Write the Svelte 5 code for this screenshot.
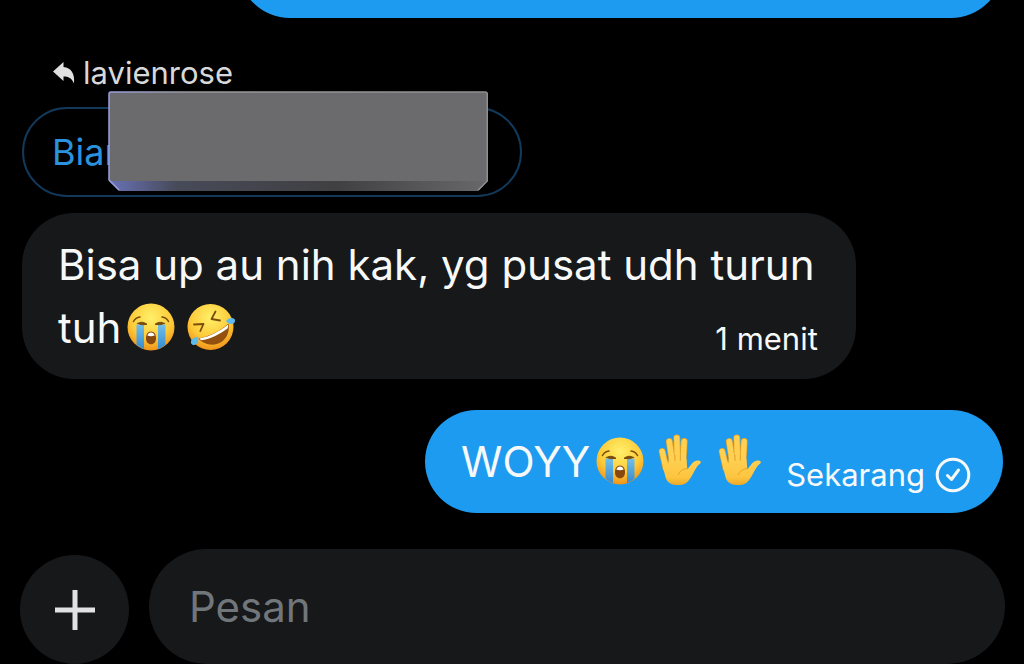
<script>
    let draft = $state("");

    const received = {
        text: "Bisa up au nih kak, yg pusat udh turun tuh",
        emoji: ["sob", "rofl"],
        time: "1 menit",
    };

    const sent = {
        text: "WOYY",
        emoji: ["sob", "hand", "hand"],
        time: "Sekarang",
    };
</script>

{#snippet emojiIcon(name)}
    {#if name === "sob"}
        <svg class="emoji" viewBox="0 0 48 48" role="img" aria-label="😭">
            <circle cx="24" cy="24" r="23.5" fill="url(#face)" />
            <path d="M9.5 21.500h7.500v24.700q-4-1.600-7.500-4.500z" fill="url(#tear)" />
            <path d="M31 21.500h7.500v20.200q-3.500 3-7.500 4.500z" fill="url(#tear)" />
            <g fill="none" stroke="#7a4e0a" stroke-linecap="round">
                <path d="M6.500 18.500q2-4 6.500-4.500M41.500 18.500q-2-4-6.500-4.500" stroke-width="1.500" />
                <path d="M10.500 20.500q4.500-3 9.500.8q-5 1.400-9.500-.8zM37.500 20.500q-4.500-3-9.500.8q5 1.400 9.500-.8z" fill="#7a4e0a" stroke-width="1" />
            </g>
            <path d="M24 28.500c3.500 0 5 3 5 6.800s-2 6-5 6-5-2.200-5-6 1.500-6.800 5-6.800z" fill="#87480f" />
            <path d="M20.300 32.500c.7-2 2-3 3.700-3s3 1 3.700 3q-3.700 1.300-7.400 0z" fill="#fff" />
        </svg>
    {:else if name === "rofl"}
        <svg class="emoji" viewBox="0 0 48 48" role="img" aria-label="🤣">
            <circle cx="23.500" cy="24" r="23" fill="url(#face)" />
            <g fill="none" stroke="#7a4e0a" stroke-width="1.800" stroke-linecap="round" stroke-linejoin="round">
                <path d="M7 21.500l9.500-.5-3.200 7" />
                <path d="M28.500 8.500l-4 7.500 8.500 1.500" />
            </g>
            <path d="M11.500 35.500C23 33.500 33 28 41.500 20.500 43 28 40 35.500 34 39.300 27 43.500 17 42 11.500 35.500z" fill="#94500f" />
            <path d="M12.500 35.500C23 33.500 33 28 41 21.500q.3 2-.5 4C33 31 24 36 14 37.300z" fill="#fff" />
            <path d="M39 18c2-3 6-4 8.500-2 1.500 2.500-.5 5-3.500 5-2 0-3.500-1-5-3z" fill="#5ebbed" />
            <path d="M11 34c1 3.500 0 7-3.500 8C4.500 42.500 3 39.500 4.500 37 6 35 8 34 11 34z" fill="#5ebbed" />
        </svg>
    {:else}
        <svg class="emoji hand" viewBox="0 0 48 52" role="img" aria-label="✋">
            <g fill="none" stroke="#e0a22a" stroke-width="6.800" stroke-linecap="round">
                <path d="M6.200 18.500l3.800 17M13.300 8.500l3.200 22M20.800 5l.7 25M28.200 8.500l-1.200 21" />
            </g>
            <g fill="none" stroke="#ffd052" stroke-width="5.400" stroke-linecap="round">
                <path d="M6.200 18.500l3.800 17M13.300 8.500l3.200 22M20.800 5l.7 25M28.200 8.500l-1.200 21" />
            </g>
            <path d="M6.800 32l7-5 16.700-1 .8 10.500c2-2.500 4.500-6.500 7-8 2.500-1.500 6-1.500 6.500.5.500 1.500-2.500 2.500-4 5-3 4.500-5 10-8.500 14-3 3.500-7 4.300-12 4-5.500-.3-9-2.500-10.500-7-1.200-4-2-8-3-13z" fill="url(#palm)" />
            <path d="M12.300 30v-4M19 28v-6M24.300 28v-6M22 42q2.500-6 9.500-6.500" fill="none" stroke="#e2a52b" stroke-width="1" />
        </svg>
    {/if}
{/snippet}

<svg class="defs" width="0" height="0" aria-hidden="true">
    <defs>
        <radialGradient id="face" cx=".5" cy=".3" r=".74">
            <stop offset="0" stop-color="#fff06a" />
            <stop offset=".6" stop-color="#fdca38" />
            <stop offset="1" stop-color="#ee8a14" />
        </radialGradient>
        <linearGradient id="tear" x1="0" y1="0" x2="0" y2="1">
            <stop offset="0" stop-color="#72bfe9" />
            <stop offset="1" stop-color="#348bd0" />
        </linearGradient>
        <linearGradient id="palm" x1="0" y1="0" x2="0" y2="1">
            <stop offset="0" stop-color="#ffd052" />
            <stop offset=".7" stop-color="#fdc540" />
            <stop offset="1" stop-color="#eda928" />
        </linearGradient>
        <linearGradient id="bevel" x1="0" y1="0" x2="1" y2="0">
            <stop offset="0" stop-color="#6872b8" />
            <stop offset=".18" stop-color="#474a58" />
            <stop offset=".6" stop-color="#404042" />
            <stop offset="1" stop-color="#68686a" />
        </linearGradient>
        <linearGradient id="edge" x1="0" y1="0" x2="1" y2="0">
            <stop offset="0" stop-color="#9a9ee0" />
            <stop offset=".2" stop-color="#99999f" />
            <stop offset="1" stop-color="#909092" />
        </linearGradient>
    </defs>
</svg>

<main class="chat">
    <section class="messages">
        <div class="bubble sent previous"></div>

        <div class="reply">
            <svg class="reply-icon" viewBox="0 0 22 22" aria-hidden="true">
                <path d="M0 9.500L10.500 0v5C18 5.500 22 11.500 21 21.500 18.500 16 15.500 14.500 10.500 14.500v4.500z" fill="#e0e0e0" />
            </svg>
            <span>lavienrose</span>
        </div>

        <div class="quote">
            <span>Bian</span>
            <svg class="cover" viewBox="0 0 380 100" preserveAspectRatio="none" aria-hidden="true">
                <path d="M1 90h378l-9 10H11z" fill="url(#bevel)" />
                <path d="M3 1h374q2 0 2 2v87H1V3q0-2 2-2z" fill="#6b6b6d" />
                <path d="M11 99L1 89V3q0-2 2-2h374q2 0 2 2v87l-9 9" fill="none" stroke="url(#edge)" stroke-width="1.500" />
            </svg>
        </div>

        <div class="bubble received">
            <span>{received.text}{#each received.emoji as name}{@render emojiIcon(name)}{/each}</span>
            <span class="time">{received.time}</span>
        </div>

        <div class="bubble sent">
            <span>{sent.text}{#each sent.emoji as name}{@render emojiIcon(name)}{/each}</span>
            <span class="status">
                {sent.time}
                <svg class="check" viewBox="0 0 36 36" role="img" aria-label="Terkirim">
                    <circle cx="18" cy="18" r="15.800" />
                    <path d="M12.500 18.500l4 4 7-9.500" />
                </svg>
            </span>
        </div>
    </section>

    <form class="composer" onsubmit={(e) => e.preventDefault()}>
        <button type="button" class="add" aria-label="Tambah">
            <svg viewBox="0 0 40 40" aria-hidden="true">
                <path d="M20 0v40M0 20h40" stroke="#e2e2e4" stroke-width="5" />
            </svg>
        </button>
        <input type="text" placeholder="Pesan" aria-label="Pesan" bind:value={draft} />
    </form>
</main>

<style>
    :global(body) {
        margin: 0;
        background: #000;
    }

    .defs {
        position: absolute;
    }

    .chat {
        display: flex;
        flex-direction: column;
        height: 100vh;
        overflow: hidden;
        background: #000;
        color: #f7f9f9;
        font-family: Inter, "Liberation Sans", sans-serif;
        font-size: 42px;
        line-height: 63px;
    }

    .messages {
        flex: 1;
        min-height: 0;
        display: flex;
        flex-direction: column;
        justify-content: flex-end;
        align-items: flex-start;
        padding: 0 21px 36px 22px;
        overflow: hidden;
    }

    .bubble {
        flex-shrink: 0;
        box-sizing: border-box;
        border-radius: 52px;
        padding: 20px 32px 20px 36px;
    }

    .received {
        width: 85%;
        background: #16181a;
    }

    .sent {
        align-self: flex-end;
        display: flex;
        align-items: flex-end;
        gap: 16px;
        margin-top: 31px;
        background: #1d9bf0;
    }

    .previous {
        width: 78%;
        height: 104px;
    }

    .reply {
        display: flex;
        align-items: center;
        gap: 8px;
        margin: 35px 0 14px;
        padding-left: 31px;
        color: #d8d8d8;
        font-size: 31px;
        line-height: 40px;
    }

    .reply-icon {
        width: 22px;
        height: 22px;
    }

    .quote {
        position: relative;
        flex-shrink: 0;
        box-sizing: border-box;
        width: 51%;
        margin-bottom: 16px;
        padding: 12px 28px;
        border: 2px solid #12395a;
        border-radius: 45px;
        color: #2b93dd;
        font-size: 36px;
        line-height: 62px;
    }

    /* sits over the quoted name */
    .cover {
        position: absolute;
        top: -18px;
        left: 84px;
        width: calc(100% - 116px);
        height: 100px;
    }

    .emoji {
        width: 48px;
        height: 48px;
        margin: 0 6px;
        vertical-align: -8px;
    }

    .hand {
        height: 52px;
    }

    .time {
        float: right;
        margin: 23px 6px 0 0;
        font-size: 31px;
        line-height: 40px;
    }

    .status {
        display: flex;
        align-items: center;
        gap: 10px;
        margin-bottom: -6px;
        font-size: 31px;
        line-height: 48px;
    }

    .check {
        width: 36px;
        height: 36px;
        fill: none;
        stroke: #f7f9f9;
        stroke-width: 3;
        stroke-linecap: round;
        stroke-linejoin: round;
    }

    .composer {
        display: flex;
        align-items: flex-end;
        gap: 20px;
        padding: 0 19px 0 20px;
    }

    .add {
        display: flex;
        align-items: center;
        justify-content: center;
        flex-shrink: 0;
        width: 109px;
        height: 109px;
        padding: 0;
        border: none;
        border-radius: 50%;
        background: #16181a;
        cursor: pointer;
    }

    .add svg {
        width: 40px;
        height: 40px;
    }

    .composer input {
        flex: 1;
        min-width: 0;
        box-sizing: border-box;
        height: 115px;
        padding: 0 40px;
        border: none;
        border-radius: 58px;
        outline: none;
        background: #16181a;
        color: #f7f9f9;
        font: inherit;
    }

    .composer input::placeholder {
        color: #71767b;
        opacity: 1;
    }
</style>
